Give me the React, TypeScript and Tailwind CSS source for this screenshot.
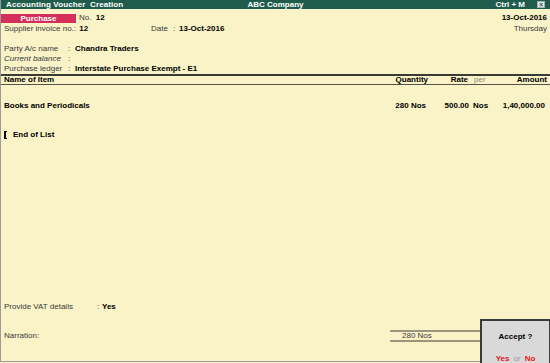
import React from 'react';

const Label: React.FC<{ text: string; italic?: boolean }> = ({ text, italic }) => (
  <span className={`text-[#3a3a3a] ${italic ? 'italic' : ''}`}>{text}</span>
);

const App: React.FC = () => {
  return (
    <div className="relative w-[550px] h-[363px] overflow-hidden bg-[#f9f3c7] font-['Liberation_Sans',Arial,sans-serif] text-[8px] leading-[10px] text-black">
      <div className="flex flex-col h-[362px] border-l border-b border-[#9b9b9b]">
        {/* Title bar */}
        <div className="h-[9px] bg-[#1f5c4b] text-white font-bold leading-[9px] flex items-center px-[5px]">
          <div className="w-[200px] tracking-[0.1px]">Accounting Voucher&nbsp; Creation</div>
          <div className="flex-1 text-center">ABC Company</div>
          <div className="w-[200px] flex items-center justify-end gap-[12px]">
            <span>Ctrl + M</span>
            <span className="w-[8px] h-[7px] bg-[#dfe6e3] border border-[#9fb1ab] flex items-center justify-center text-[#1f5c4b] text-[7px] leading-[6px]">×</span>
          </div>
        </div>

        {/* Voucher head */}
        <div className="mt-[4px] h-[10px] flex items-center pr-[3px]">
          <div className="w-[75px] h-[9px] bg-[#d42f5a] text-white font-bold text-center leading-[9px]">Purchase</div>
          <div className="ml-[3px] flex-1">
            <Label text="No." /> <span className="font-bold ml-[2px]">12</span>
          </div>
          <div className="font-bold">13-Oct-2016</div>
        </div>
        <div className="h-[11px] flex items-center pl-[3px] pr-[3px]">
          <div className="w-[147px]">
            <Label text="Supplier invoice no.:" /> <span className="font-bold ml-[1px]">12</span>
          </div>
          <div className="flex-1 flex">
            <span className="w-[22px] text-[#3a3a3a]">Date</span>
            <span className="w-[6px] text-[#3a3a3a]">:</span>
            <span className="font-bold">13-Oct-2016</span>
          </div>
          <div className="text-[#3a3a3a]">Thursday</div>
        </div>

        {/* Party details */}
        <div className="mt-[10px] pl-[3px] flex flex-col">
          {[
            ['Party A/c name', 'Chandra Traders', false],
            ['Current balance', '', true],
            ['Purchase ledger', 'Interstate Purchase Exempt - E1', false],
          ].map(([l, v, it]) => (
            <div key={l as string} className="h-[10px] flex items-center">
              <span className="w-[64px]"><Label text={l as string} italic={it as boolean} /></span>
              <span className="w-[7px] text-[#3a3a3a]">:</span>
              <span className="font-bold">{v as string}</span>
            </div>
          ))}
        </div>

        {/* Items table header */}
        <div className="h-[11px] flex items-center border-t-2 border-b border-t-[#3b3b36] border-b-[#55534a] font-bold pr-[3px]">
          <div className="flex-1 pl-[3px]">Name of Item</div>
          <div className="w-[60px] text-right pr-[2px]">Quantity</div>
          <div className="w-[40px] text-right pr-[2px]">Rate</div>
          <div className="w-[20px] pl-[4px] font-normal text-[#8a8a7a]">per</div>
          <div className="w-[57px] text-right">Amount</div>
        </div>

        {/* Item rows */}
        <div className="mt-[16px] h-[10px] flex items-center font-bold pr-[3px]">
          <div className="flex-1 pl-[3px]">Books and Periodicals</div>
          <div className="w-[60px] text-right pr-[4px]">280 Nos</div>
          <div className="w-[40px] text-right pr-[1px]">500.00</div>
          <div className="w-[20px] pl-[3px]">Nos</div>
          <div className="w-[57px] text-right pr-[2px]">1,40,000.00</div>
        </div>
        <div className="mt-[19px] h-[10px] flex items-center font-bold pl-[3px]">
          <span className="w-[3px] h-[8px] border-l-2 border-y border-black mr-[6px]" />
          <span>End of List</span>
        </div>

        <div className="flex-1" />

        {/* Footer */}
        <div className="h-[10px] flex items-center pl-[3px]">
          <span className="w-[93px]"><Label text="Provide VAT details" /></span>
          <span className="w-[5px] text-[#3a3a3a]">:</span>
          <span className="font-bold">Yes</span>
        </div>
        <div className="mt-[18px] h-[12px] flex items-center pl-[3px]">
          <div className="flex-1"><Label text="Narration:" /></div>
          <div className="w-[90px] h-[12px] border-y-2 border-[#9c9579] pl-[12px] leading-[8px] text-[#3a3a3a]">280 Nos</div>
          <div className="w-[70px]" />
        </div>
        <div className="h-[19px]" />
      </div>

      {/* Accept dialog */}
      <div className="absolute right-0 top-[319px] w-[70px] h-[44px] bg-[#d9d9d9] border-l-2 border-t-2 border-r border-[#3a3a3a] flex flex-col items-center">
        <div className="mt-[11px] font-bold">Accept ?</div>
        <div className="mt-[12px] flex gap-[4px] font-bold">
          <span className="text-[#e8141c]">Yes</span>
          <span className="font-normal text-[#9a9a9a]">or</span>
          <span className="text-[#e8141c]">No</span>
        </div>
      </div>
    </div>
  );
};

export default App;
